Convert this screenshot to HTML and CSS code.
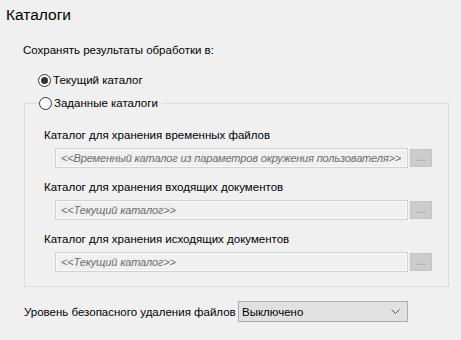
FILE: index.html
```html
<!DOCTYPE html>
<html lang="ru">
<head>
<meta charset="utf-8">
<title>Каталоги</title>
<link rel="stylesheet" href="styles.css">
</head>
<body>
<h1 class="title">Каталоги</h1>
<div class="content">
  <div class="caption">Сохранять результаты обработки в:</div>
  <label class="radio-row first">
    <span class="radio checked"></span><span>Текущий каталог</span>
  </label>
  <fieldset class="group">
    <legend class="legend">
      <label class="radio-row"><span class="radio"></span><span>Заданные каталоги</span></label>
    </legend>
    <div class="field first-field">
      <div class="field-label">Каталог для хранения временных файлов</div>
      <div class="field-input">
        <div class="input">&lt;&lt;Временный каталог из параметров окружения пользователя&gt;&gt;</div>
        <div class="browse">...</div>
      </div>
    </div>
    <div class="field">
      <div class="field-label">Каталог для хранения входящих документов</div>
      <div class="field-input">
        <div class="input">&lt;&lt;Текущий каталог&gt;&gt;</div>
        <div class="browse">...</div>
      </div>
    </div>
    <div class="field">
      <div class="field-label">Каталог для хранения исходящих документов</div>
      <div class="field-input">
        <div class="input">&lt;&lt;Текущий каталог&gt;&gt;</div>
        <div class="browse">...</div>
      </div>
    </div>
  </fieldset>
  <div class="bottom-row">
    <span class="bottom-label">Уровень безопасного удаления файлов</span>
    <div class="select">
      <span>Выключено</span>
      <svg class="chev" width="9" height="5" viewBox="0 0 9 5"><path d="M0.5 0.5 L4.5 4.5 L8.5 0.5" fill="none" stroke="#555" stroke-width="1"/></svg>
    </div>
  </div>
</div>
</body>
</html>
```
FILE: styles.css
```css
html, body {
  margin: 0;
  padding: 0;
  background: #f0f0f0;
}
body {
  width: 461px;
  height: 340px;
  overflow: hidden;
  font-family: "Liberation Sans", Arial, sans-serif;
  font-size: 11.5px;
  color: #000;
}
.title {
  margin: 0;
  padding: 5px 6px 0;
  font-size: 15.5px;
  font-weight: normal;
  line-height: 20px;
}
.content {
  padding-left: 23px;
  padding-right: 12px;
}
.caption {
  margin-top: 17px;
  line-height: 16px;
  white-space: nowrap;
}
.radio-row {
  display: flex;
  align-items: center;
  gap: 2px;
  line-height: 16px;
  height: 16px;
  white-space: nowrap;
}
.radio-row.first {
  margin-top: 14px;
  margin-left: 15px;
}
.radio {
  box-sizing: border-box;
  width: 13px;
  height: 13px;
  border: 1px solid #333;
  border-radius: 50%;
  background: #fff;
  display: flex;
  align-items: center;
  justify-content: center;
}
.radio.checked::after {
  content: "";
  width: 7px;
  height: 7px;
  border-radius: 50%;
  background: #333;
}
.group {
  margin: 7px 0 0 1px;
  padding: 0 0 14px 0;
  width: 425px;
  box-sizing: border-box;
  border: 1px solid #dcdcdc;
}
.legend {
  margin-left: 14px;
  padding: 0 3px 0 0;
}
.field {
  padding-left: 19px;
  margin-top: 11px;
}
.field.first-field {
  margin-top: 16px;
}
.field-label {
  line-height: 16px;
  white-space: nowrap;
}
.field-input {
  display: flex;
  align-items: center;
  gap: 2px;
  margin-top: 5px;
  margin-left: 11px;
}
.input {
  box-sizing: border-box;
  width: 353px;
  height: 20px;
  border: 1px solid #d2d2d2;
  box-shadow: inset 0 0 0 1px #fafafa;
  background: #f0f0f0;
  color: #6d6d6d;
  font-style: italic;
  font-size: 11px;
  letter-spacing: -0.15px;
  line-height: 18px;
  padding-left: 5px;
  white-space: nowrap;
  overflow: hidden;
}
.browse {
  box-sizing: border-box;
  width: 22px;
  height: 18px;
  background: #cccccc;
  border: 1px solid #c4c4c4;
  color: #8a8a8a;
  font-size: 11px;
  line-height: 14px;
  text-align: center;
}
.bottom-row {
  display: flex;
  align-items: center;
  margin-top: 14px;
  margin-left: 1px;
}
.bottom-label {
  width: 214px;
  flex-shrink: 0;
  line-height: 16px;
  white-space: nowrap;
}
.select {
  box-sizing: border-box;
  width: 170px;
  height: 21px;
  border: 1px solid #adadad;
  background: #e1e1e1;
  display: flex;
  align-items: center;
  justify-content: space-between;
  padding: 0 7px 0 3px;
}
.chev {
  display: block;
}
```
